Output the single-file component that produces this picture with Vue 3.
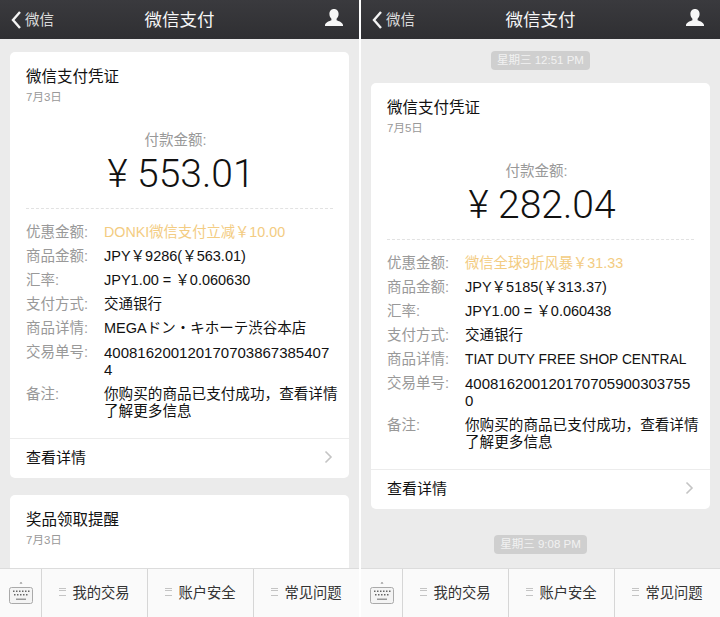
<script setup>
const phones = [
  {
    id: "a",
    card: {
      date: "7月3日",
      amount: "553.01",
      rows: [
        { label: "优惠金额:", value: "DONKI微信支付立减￥10.00", kind: "promo" },
        { label: "商品金额:", value: "JPY￥9286(￥563.01)" },
        { label: "汇率:", value: "JPY1.00 = ￥0.060630" },
        { label: "支付方式:", value: "交通银行" },
        { label: "商品详情:", value: "MEGAドン・キホーテ渋谷本店" },
        { label: "交易单号:", value: "4008162001201707038673854074", kind: "num" },
        { label: "备注:", value: "你购买的商品已支付成功，查看详情了解更多信息", kind: "note" }
      ]
    },
    second: { title: "奖品领取提醒", date: "7月3日" }
  },
  {
    id: "b",
    topTime: "星期三 12:51 PM",
    bottomTime: "星期三 9:08 PM",
    card: {
      date: "7月5日",
      amount: "282.04",
      rows: [
        { label: "优惠金额:", value: "微信全球9折风暴￥31.33", kind: "promo" },
        { label: "商品金额:", value: "JPY￥5185(￥313.37)" },
        { label: "汇率:", value: "JPY1.00 = ￥0.060438" },
        { label: "支付方式:", value: "交通银行" },
        { label: "商品详情:", value: "TIAT DUTY FREE SHOP CENTRAL", kind: "latin" },
        { label: "交易单号:", value: "4008162001201707059003037550", kind: "num" },
        { label: "备注:", value: "你购买的商品已支付成功，查看详情了解更多信息", kind: "note" }
      ]
    }
  }
];

const menus = ["我的交易", "账户安全", "常见问题"];
</script>

<template>
  <div class="page">
    <div class="phone" v-for="phone in phones" :key="phone.id">
      <header class="nav">
        <div class="back">
          <svg width="12" height="20" viewBox="0 0 12 20">
            <path d="M10 2 L3 10 L10 18" fill="none" stroke="#f4f4f4" stroke-width="2.4" />
          </svg>
          <span>微信</span>
        </div>
        <div class="nav-title">微信支付</div>
        <svg class="person" width="20" height="20" viewBox="0 0 20 20">
          <path d="M10 1c-3 0-4.600 2.300-4.600 5 0 2 .9 3.700 2 4.700v1.500c-1.500.8-6 1.800-6.400 4.800v1h18v-1c-.4-3-4.900-4-6.400-4.800v-1.500c1.100-1 2-2.700 2-4.700 0-2.700-1.600-5-4.600-5z" fill="#f6f6f6" />
        </svg>
      </header>

      <main class="feed">
        <div v-if="phone.topTime" class="time top">{{ phone.topTime }}</div>
        <section class="card">
          <div class="head">
            <div class="card-title">微信支付凭证</div>
            <div class="date">{{ phone.card.date }}</div>
          </div>
          <div class="money">
            <div class="money-label">付款金额:</div>
            <div class="money-value">¥ {{ phone.card.amount }}</div>
          </div>
          <div class="rows">
            <div class="row" v-for="row in phone.card.rows" :key="row.label" :class="row.kind">
              <div class="row-label">{{ row.label }}</div>
              <div class="row-value">{{ row.value }}</div>
            </div>
          </div>
          <div class="more">
            <span>查看详情</span>
            <svg width="9" height="14" viewBox="0 0 9 14">
              <path d="M1.500 1.500 L7 7 L1.500 12.500" fill="none" stroke="#c4c4c4" stroke-width="1.600" />
            </svg>
          </div>
        </section>
        <div v-if="phone.bottomTime" class="time bottom">{{ phone.bottomTime }}</div>
        <section v-if="phone.second" class="card second">
          <div class="head">
            <div class="card-title">{{ phone.second.title }}</div>
            <div class="date">{{ phone.second.date }}</div>
          </div>
        </section>
      </main>

      <footer class="tabs">
        <div class="keyboard">
          <svg width="26" height="26" viewBox="0 0 26 26">
            <path d="M11.500 3.500 L13 2 L14.500 3.500z" fill="#777" />
            <rect x="1.500" y="7.500" width="23" height="16" rx="2" fill="#f4f4f4" stroke="#aaa" />
            <g fill="#666">
              <rect x="5" y="10.500" width="1.500" height="1.500" />
              <rect x="8" y="10.500" width="1.500" height="1.500" />
              <rect x="11" y="10.500" width="1.500" height="1.500" />
              <rect x="14" y="10.500" width="1.500" height="1.500" />
              <rect x="17" y="10.500" width="1.500" height="1.500" />
              <rect x="20" y="10.500" width="1.500" height="1.500" />
              <rect x="6" y="14" width="1.500" height="1.500" />
              <rect x="9" y="14" width="1.500" height="1.500" />
              <rect x="12" y="14" width="1.500" height="1.500" />
              <rect x="15" y="14" width="1.500" height="1.500" />
              <rect x="18" y="14" width="1.500" height="1.500" />
            </g>
            <rect x="8" y="18.500" width="10" height="1.500" fill="#999" />
          </svg>
        </div>
        <div class="tab" v-for="menu in menus" :key="menu">
          <span class="lines"></span>
          <span>{{ menu }}</span>
        </div>
      </footer>
    </div>
  </div>
</template>

<style>
body {
  background: #fff;
}
</style>

<style scoped>
.page {
  display: flex;
  justify-content: space-between;
  width: 720px;
  height: 617px;
  overflow: hidden;
  font-family: "Liberation Sans", "Noto Sans CJK SC", sans-serif;
}

.phone {
  display: flex;
  flex-direction: column;
  width: 359px;
  height: 617px;
  background: #ebebeb;
}

.nav {
  flex: none;
  display: flex;
  align-items: center;
  justify-content: center;
  position: relative;
  height: 39px;
  padding-bottom: 3px;
  box-sizing: border-box;
  background: linear-gradient(#3a3a3e, #2f2f32);
  color: #f6f6f6;
}

.back {
  position: absolute;
  left: 10px;
  top: 8px;
  display: flex;
  align-items: center;
  gap: 3px;
  font-size: 14.500px;
  color: #dcdcdc;
}

.back span {
  margin-bottom: 3px;
}

.nav-title {
  font-size: 17.500px;
}

.person {
  position: absolute;
  right: 15px;
  top: 8px;
}

.feed {
  flex: 1;
  min-height: 0;
  overflow: hidden;
  padding: 13px 10px 0;
}

.time {
  width: fit-content;
  margin: 0 auto;
  padding: 0 6px;
  height: 19px;
  line-height: 19px;
  border-radius: 4px;
  background: #cfcfcf;
  color: #f2f2f2;
  font-size: 11.500px;
}

.time.top {
  margin-top: -1px;
  margin-bottom: 13px;
}

.time.bottom {
  margin-top: 26px;
}

.card {
  background: #fff;
  border-radius: 5px;
}

.second {
  margin-top: 17px;
  height: 120px;
}

.head {
  padding: 15px 16px 0;
}

.card-title {
  font-size: 15.500px;
  line-height: 20px;
  color: #111;
}

.date {
  margin-top: 1px;
  font-size: 11.500px;
  line-height: 18px;
  color: #999;
}

.money {
  margin: 24px 16px 0;
  padding-bottom: 13px;
  border-bottom: 1px dashed #e2e2e2;
  text-align: center;
}

.money-label {
  padding-right: 8px;
  font-size: 14.500px;
  line-height: 20px;
  color: #999;
}

.money-value {
  margin-top: 3px;
  padding-left: 3px;
  font-family: Roboto, "Liberation Sans", sans-serif;
  font-size: 39px;
  font-weight: 300;
  line-height: 42px;
  color: #111;
}

.rows {
  padding: 15px 0 19px 16px;
}

.row {
  display: flex;
  margin-bottom: 7px;
  font-size: 14.500px;
  line-height: 17px;
}

.row:last-child {
  margin-bottom: 0;
}

.row-label {
  flex: none;
  width: 78px;
  color: #999;
}

.row-value {
  width: 232px;
  color: #111;
}

.promo .row-value {
  font-size: 14.300px;
  color: #f3cc82;
}

.num .row-value {
  font-size: 15px;
  word-break: break-all;
}

.latin .row-value {
  font-size: 13.800px;
}

.note .row-value {
  width: 234px;
  font-size: 14.600px;
  line-height: 16.500px;
}

.note {
  padding-top: 1px;
}

.more {
  display: flex;
  align-items: center;
  justify-content: space-between;
  height: 40px;
  padding: 0 16px 4px;
  box-sizing: border-box;
  border-top: 1px solid #ececec;
  font-size: 15px;
  color: #111;
}

.tabs {
  flex: none;
  display: flex;
  height: 48px;
  background: #fafafa;
  border-top: 1px solid #dcdcdc;
}

.keyboard {
  flex: none;
  width: 41px;
  display: flex;
  align-items: center;
  justify-content: center;
}

.tab {
  flex: 1;
  display: flex;
  align-items: center;
  justify-content: center;
  gap: 6px;
  padding-bottom: 3px;
  border-left: 1px solid #d6d6d6;
  font-size: 14.300px;
  color: #333;
}

.lines {
  width: 7px;
  height: 6px;
  border-top: 1px solid #c4c4c4;
  border-bottom: 1px solid #c4c4c4;
  position: relative;
}

.lines::after {
  content: "";
  position: absolute;
  left: 0;
  right: 0;
  top: 1.500px;
  height: 1px;
  background: #c4c4c4;
}
</style>
